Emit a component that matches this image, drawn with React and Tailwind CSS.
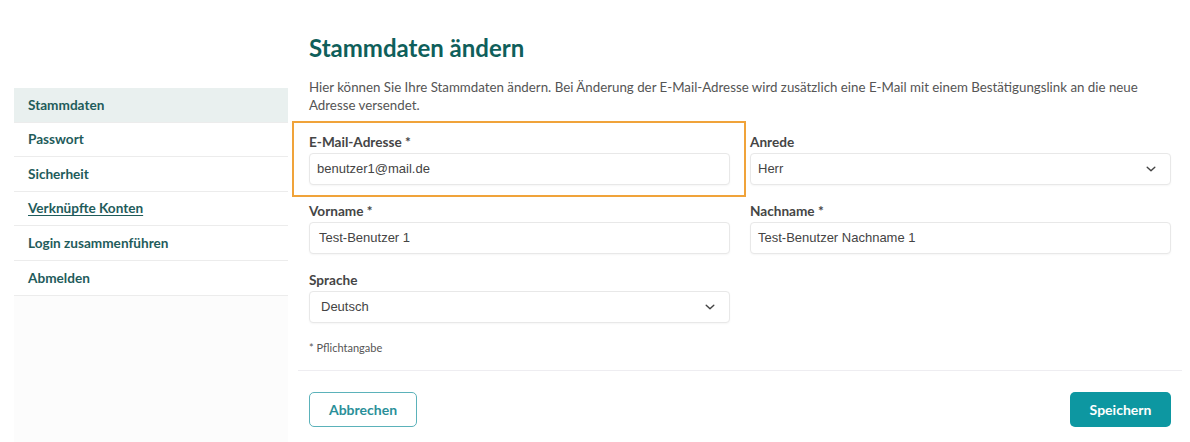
import React from "react";

const lato = { fontFamily: "Lato, 'Open Sans', sans-serif" };

function Chevron() {
  return (
    <svg width="10" height="6" viewBox="0 0 10 6" fill="none" className="shrink-0">
      <path d="M1.2 1.2 L5 4.8 L8.8 1.2" stroke="#444" strokeWidth="1.4" strokeLinecap="round" strokeLinejoin="round" />
    </svg>
  );
}

function Label({ children }) {
  return (
    <div className="text-[13.6px] font-bold text-[#454545] leading-[16px] mb-[3px] font-['Lato',sans-serif]">
      {children}
    </div>
  );
}

function Input({ value, pl = "pl-[7px]" }) {
  return (
    <div className={`h-[32px] w-full rounded-[4px] border border-[#e8e8e8] bg-white shadow-[0_1px_2px_rgba(0,0,0,0.04)] flex items-center ${pl} text-[13px] text-[#444] font-['Liberation_Sans',Arial,sans-serif]`}>
      {value}
    </div>
  );
}

function Select({ value, pl = "pl-[7px]" }) {
  return (
    <div className={`h-[32px] w-full rounded-[4px] border border-[#e8e8e8] bg-white shadow-[0_1px_2px_rgba(0,0,0,0.04)] flex items-center justify-between ${pl} pr-[14px] text-[13px] text-[#444] font-['Liberation_Sans',Arial,sans-serif]`}>
      <span>{value}</span>
      <Chevron />
    </div>
  );
}

const navItems = [
  { label: "Stammdaten", active: true },
  { label: "Passwort" },
  { label: "Sicherheit" },
  { label: "Verknüpfte Konten", underline: true },
  { label: "Login zusammenführen" },
  { label: "Abmelden" },
];

export default function App() {
  return (
    <div className="w-[1190px] h-[442px] bg-white overflow-hidden flex pl-[14px] gap-[10px]" style={lato}>
      <aside className="w-[274px] shrink-0 pt-[88px] flex flex-col">
        <nav className="flex flex-col bg-white">
          {navItems.map((it) => (
            <div
              key={it.label}
              className={`h-[34.6px] flex items-center pl-[14px] border-b border-[#ececec] text-[13.6px] font-bold text-[#1f5c5b] ${it.active ? "bg-[#e9f0ef]" : "bg-white"} ${it.underline ? "underline underline-offset-2" : ""}`}
            >
              {it.label}
            </div>
          ))}
        </nav>
        <div className="flex-1 bg-[#fcfcfc]" />
      </aside>

      <main className="w-[884px] shrink-0 flex flex-col">
        <div className="px-[11px]">
          <h1 className="pt-[34px] text-[24px] leading-[28px] font-bold text-[#0f5f5b]">Stammdaten ändern</h1>
          <p className="mt-[16px] text-[13.3px] leading-[18px] text-[#555]">
            Hier können Sie Ihre Stammdaten ändern. Bei Änderung der E-Mail-Adresse wird zusätzlich eine E-Mail mit einem Bestätigungslink an die neue Adresse versendet.
          </p>

          <div className="mt-[20px] grid grid-cols-2 gap-x-[20px] gap-y-[18px]">
            <div className="relative">
              <div className="absolute -left-[17px] -right-[16px] -top-[13px] -bottom-[12px] border-2 border-[#f0a33a] pointer-events-none" />
              <Label>E-Mail-Adresse *</Label>
              <Input value="benutzer1@mail.de" />
            </div>
            <div>
              <Label>Anrede</Label>
              <Select value="Herr" />
            </div>
            <div>
              <Label>Vorname *</Label>
              <Input value="Test-Benutzer 1" pl="pl-[9px]" />
            </div>
            <div>
              <Label>Nachname *</Label>
              <Input value="Test-Benutzer Nachname 1" />
            </div>
            <div>
              <Label>Sprache</Label>
              <Select value="Deutsch" pl="pl-[11px]" />
            </div>
            <div />
          </div>

          <div className="mt-[18px] text-[11px] leading-[14px] text-[#555]">* Pflichtangabe</div>
        </div>

        <div className="mt-[15px] border-t border-[#eeedf1]" />

        <div className="px-[11px] mt-[21px] flex justify-between">
          <button className="h-[35px] w-[108px] rounded-[5px] border border-[#5bb2ba] bg-white text-[14px] font-bold text-[#2a8f99]">
            Abbrechen
          </button>
          <button className="h-[35px] w-[101px] rounded-[5px] bg-[#0d97a1] text-[14px] font-bold text-white">
            Speichern
          </button>
        </div>
      </main>
    </div>
  );
}
